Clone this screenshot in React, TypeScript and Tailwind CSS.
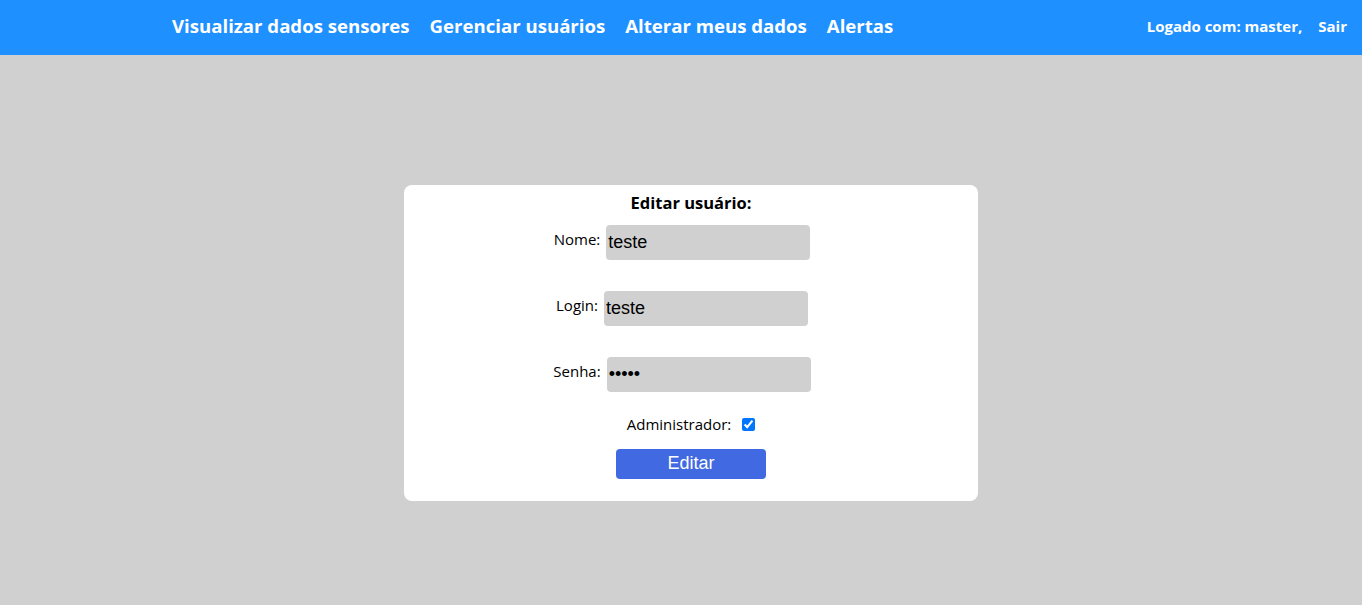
import React from "react";

const ui = { fontFamily: '"Open Sans", "Noto Sans", sans-serif' };
const arial = { fontFamily: '"Liberation Sans", Arial, sans-serif' };

function Row({ label, value, type = "text" }: { label: string; value: string; type?: string }) {
  return (
    <div className="flex justify-center pr-[18px] h-[35px]">
      <span className="text-[15px] text-black leading-[20px] pt-[4px] mr-[6px]" style={ui}>
        {label}
      </span>
      <input
        type={type}
        defaultValue={value}
        className="w-[204px] h-[35px] rounded-[4px] bg-[#d0d0d0] px-[2px] text-[18px] text-black outline-none"
        style={arial}
      />
    </div>
  );
}

export default function App() {
  return (
    <div className="min-h-[605px] bg-[#d0d0d0] flex flex-col">
      <nav className="h-[55px] bg-[#1e90ff] flex items-center text-white pb-[4px]" style={ui}>
        <div className="flex gap-[20px] ml-[172px] text-[18.6px] font-bold">
          <span>Visualizar dados sensores</span>
          <span>Gerenciar usuários</span>
          <span>Alterar meus dados</span>
          <span>Alertas</span>
        </div>
        <div className="ml-auto mr-[15px] flex gap-[16px] text-[15px] font-bold pt-[2px]">
          <span>Logado com: master,</span>
          <span>Sair</span>
        </div>
      </nav>
      <div className="flex justify-center pt-[130px] pl-[20px]">
        <div className="w-[574px] h-[316px] bg-white rounded-[8px] flex flex-col items-center pt-[8px]">
          <h2 className="text-[16.5px] font-bold text-black leading-[22px] -mt-[1px]" style={ui}>
            Editar usuário:
          </h2>
          <div className="flex flex-col gap-[31px] mt-[11px] self-stretch">
            <Row label="Nome:" value="teste" />
            <Row label="Login:" value="teste" />
            <Row label="Senha:" value="teste" type="password" />
          </div>
          <div className="flex items-center gap-[11px] mt-[21px]">
            <span className="text-[15px] text-black" style={ui}>
              Administrador:
            </span>
            <input type="checkbox" defaultChecked className="w-[13px] h-[13px] m-0" />
          </div>
          <button
            className="mt-[13px] w-[150px] h-[30px] rounded-[4px] bg-[#4169e1] text-white text-[18px]"
            style={arial}
          >
            Editar
          </button>
        </div>
      </div>
    </div>
  );
}
